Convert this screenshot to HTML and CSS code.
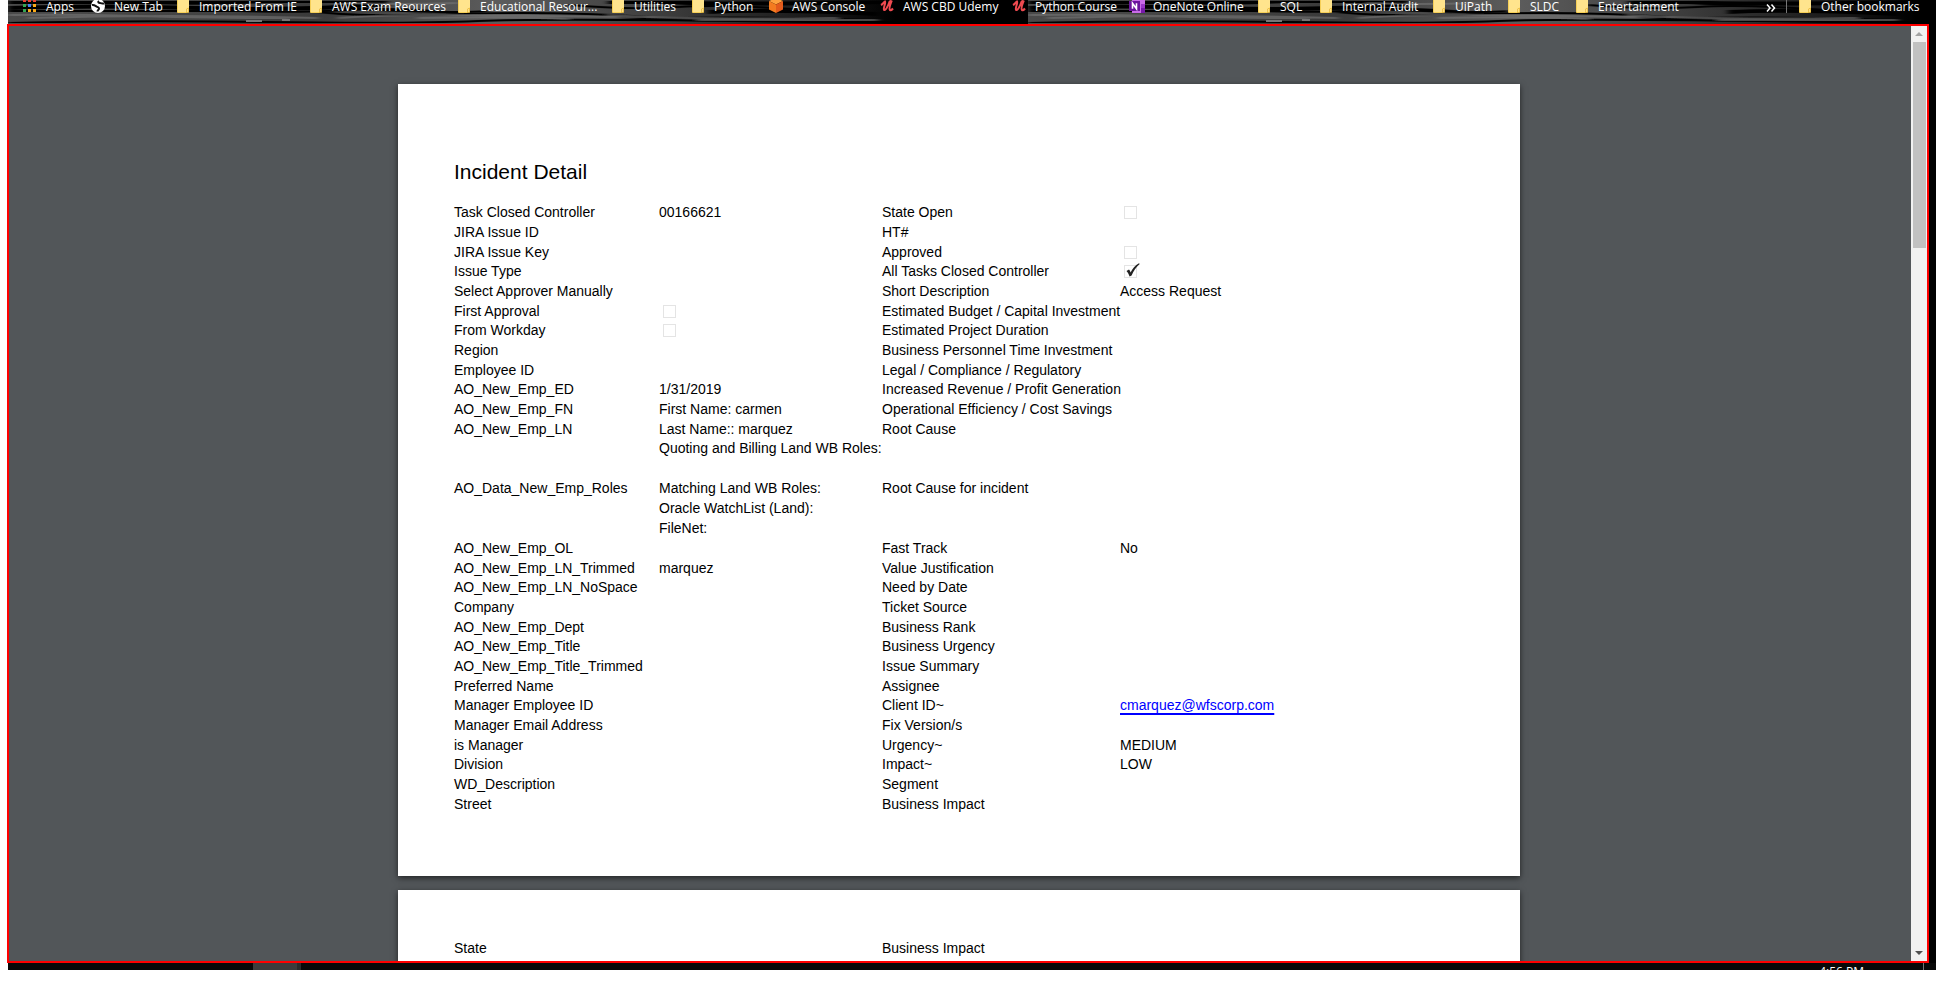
FILE: index.html
```html
<!DOCTYPE html>
<html lang="en">
<head>
<meta charset="utf-8">
<title>Incident Detail</title>
<link rel="stylesheet" href="styles.css">
</head>
<body>
<svg width="0" height="0" class="sprites" aria-hidden="true">
  <symbol id="folder" viewBox="0 0 16 16">
    <path d="M2 0h12v11.500l0 3.500H2z" fill="#ffe48d"/>
    <path d="M2.500 0v15.500h9" fill="none" stroke="#f6cf57"/>
    <path d="M11.500 16v-4l2-1v4.500h-2" fill="#ffe08a" stroke="#e8bb3c" stroke-width=".8"/>
  </symbol>
  <symbol id="apps" viewBox="0 0 16 16">
    <path d="M1 2h3v3H1zM6 2h3v3H6zM11 2h3v3h-3z" fill="#ea4335"/>
    <path d="M1 7h3v3H1zM1 12h3v3H1z" fill="#34a853"/>
    <path d="M6 7h3v3H6z" fill="#4285f4"/>
    <path d="M11 7h3v3h-3zM6 12h3v3H6zM11 12h3v3h-3z" fill="#fbab18"/>
  </symbol>
  <symbol id="globe" viewBox="0 0 16 16">
    <circle cx="8" cy="9" r="7" fill="#fff"/>
    <path d="M2 8c2-.5 3 .5 4.500 1.500s2.500.5 2.500 2-1.500 1.500-1.500 3M9 4c-1.500 1-.5 2 1 2s2.500 1 4 .5" fill="none" stroke="#111" stroke-width="2"/>
  </symbol>
  <symbol id="cube" viewBox="0 0 16 16">
    <path d="M8 1l7 3-7 3.500L1 4z" fill="#ffa13d"/>
    <path d="M1 4l7 3.500V16l-7-3.500z" fill="#f47b20"/>
    <path d="M15 4L8 7.500V16l7-3.500z" fill="#e35b1c"/>
  </symbol>
  <symbol id="udemy" viewBox="0 0 16 16">
    <path d="M2 8c2-1 2.500-3 4-3.500C7 6.500 4 10.500 5 12.800c1 1.200 3.500-2 5.500-8 1-1 1.500-.8 2-.5C11 8 10 12 11 13.200c1 .5 2-.5 3-1.700" fill="none" stroke="#ef4a50" stroke-width="2"/>
  </symbol>
  <symbol id="onenote" viewBox="0 0 16 16">
    <path d="M3 2h13v14H3z" fill="#c96be8"/>
    <path d="M12 7h4v4h-4z" fill="#9a35c9"/><path d="M12 11h4v5h-4z" fill="#7719aa"/>
    <path d="M0 4h11v10H0z" fill="#6b149c"/>
    <path d="M3.500 11.800V6.200l4 5.600V6.200" fill="none" stroke="#fff" stroke-width="1.600"/>
  </symbol>
</svg>
<div class="desktop">
  <nav class="bookmarks" aria-label="Bookmarks">
    <svg class="grain" aria-hidden="true">
      <defs>
        <filter id="soft" x="0" y="0" width="1" height="1"><feGaussianBlur stdDeviation="3 .6"/></filter>
        <linearGradient id="wood" x1="0" x2="1" y1="0" y2="0">
          <stop offset="0" stop-color="#4a4a4a"/><stop offset=".18" stop-color="#444"/>
          <stop offset=".3" stop-color="#3a3a3a"/><stop offset=".48" stop-color="#5c5c5c"/>
          <stop offset=".62" stop-color="#424242"/><stop offset=".78" stop-color="#1c1c1c"/>
          <stop offset=".87" stop-color="#000"/><stop offset="1" stop-color="#000"/>
        </linearGradient>
        <pattern id="streaks" width="1020" height="24" patternUnits="userSpaceOnUse">
          <rect width="1020" height="24" fill="url(#wood)"/>
          <g filter="url(#soft)">
            <g fill="none" stroke="#050505">
              <path d="M0 2H140q60 2 120-1h120M0 8q90-3 190 0t190-4" stroke-width="4"/>
              <path d="M0 11h230q60 2 110-1t120 4M330 8q110 6 150 3" stroke-width="2"/>
              <path d="M310 12q40 5 140 2t190 3M560 5q60 5 110 2t140 4" stroke-width="2"/>
              <path d="M0 23q120-3 260-1t210-1 330 1h220M610 20q100-5 260 0" stroke-width="2"/>
              <path d="M600 2h60q50 3 220 0M700 12q60-3 170 2" stroke-width="4"/>
            </g>
            <g fill="none" stroke="#777" stroke-opacity=".6">
              <path d="M0 15q60-1 130 1t150 2M20 18q140-4 290 0M330 18q60-4 130-3t150 2" stroke-width="2"/>
              <path d="M340 3q50 2 110 0M410 18q90-2 150 1M600 15q70 5 230 3M690 20h180" stroke-width="2"/>
            </g>
          </g>
          <path d="M238 21h16M274 20h8" stroke="#777" stroke-width="2"/>
        </pattern>
      </defs>
      <rect width="100%" height="24" fill="url(#streaks)"/>
    </svg>
    <a href="#"><svg><use href="#apps"/></svg>Apps</a>
    <a href="#"><svg><use href="#globe"/></svg>New Tab</a>
    <a href="#"><svg><use href="#folder"/></svg>Imported From IE</a>
    <a href="#"><svg><use href="#folder"/></svg>AWS Exam Reources</a>
    <a href="#"><svg><use href="#folder"/></svg>Educational Resour...</a>
    <a href="#"><svg><use href="#folder"/></svg>Utilities</a>
    <a href="#"><svg><use href="#folder"/></svg>Python</a>
    <a href="#"><svg><use href="#cube"/></svg>AWS Console</a>
    <a href="#"><svg><use href="#udemy"/></svg>AWS CBD Udemy</a>
    <a href="#"><svg><use href="#udemy"/></svg>Python Course</a>
    <a href="#"><svg><use href="#onenote"/></svg>OneNote Online</a>
    <a href="#"><svg><use href="#folder"/></svg>SQL</a>
    <a href="#"><svg><use href="#folder"/></svg>Internal Audit</a>
    <a href="#"><svg><use href="#folder"/></svg>UiPath</a>
    <a href="#"><svg><use href="#folder"/></svg>SLDC</a>
    <a href="#"><svg><use href="#folder"/></svg>Entertainment</a>
    <button type="button" class="more" aria-label="More bookmarks"><svg viewBox="0 0 10 8"><path d="M1 0.500l3 3.500-3 3.500M5.500 0.500l3 3.500-3 3.500"/></svg></button>
    <a href="#" class="other"><svg><use href="#folder"/></svg>Other bookmarks</a>
  </nav>

  <main class="viewer">
    <div class="pages">
      <section class="page">
        <h1>Incident Detail</h1>
        <table>
          <colgroup><col class="name"><col class="value"><col class="name2"><col></colgroup>
          <tbody>
            <tr><th>Task Closed Controller</th><td>00166621</td><th><label for="open">State Open</label></th><td><input type="checkbox" id="open"></td></tr>
            <tr><th>JIRA Issue ID</th><td></td><th>HT#</th><td></td></tr>
            <tr><th>JIRA Issue Key</th><td></td><th><label for="approved">Approved</label></th><td><input type="checkbox" id="approved"></td></tr>
            <tr><th>Issue Type</th><td></td><th><label for="closed">All Tasks Closed Controller</label></th><td class="ticked"><input type="checkbox" id="closed" checked><svg viewBox="0 0 14 14" aria-hidden="true"><path d="M0.500 8l2.500-1.500c.8.700 1.200 1.800 1.600 3C6.500 5.500 9 2.500 13 .3l.7.600C10 4 7.500 7.800 5.600 12.500l-2 1C2.800 11.500 2 9.500.5 8z"/></svg></td></tr>
            <tr><th>Select Approver Manually</th><td></td><th>Short Description</th><td>Access Request</td></tr>
            <tr><th><label for="first">First Approval</label></th><td><input type="checkbox" id="first"></td><th>Estimated Budget / Capital Investment</th><td></td></tr>
            <tr><th><label for="workday">From Workday</label></th><td><input type="checkbox" id="workday"></td><th>Estimated Project Duration</th><td></td></tr>
            <tr><th>Region</th><td></td><th>Business Personnel Time Investment</th><td></td></tr>
            <tr><th>Employee ID</th><td></td><th>Legal / Compliance / Regulatory</th><td></td></tr>
            <tr><th>AO_New_Emp_ED</th><td>1/31/2019</td><th>Increased Revenue / Profit Generation</th><td></td></tr>
            <tr><th>AO_New_Emp_FN</th><td>First Name: carmen</td><th>Operational Efficiency / Cost Savings</th><td></td></tr>
            <tr><th>AO_New_Emp_LN</th><td>Last Name:: marquez</td><th>Root Cause</th><td></td></tr>
            <tr class="roles"><th>AO_Data_New_Emp_Roles</th><td>Quoting and Billing Land WB Roles:<br><br>Matching Land WB Roles:<br>Oracle WatchList (Land):<br>FileNet:</td><th>Root Cause for incident</th><td></td></tr>
            <tr><th>AO_New_Emp_OL</th><td></td><th>Fast Track</th><td>No</td></tr>
            <tr><th>AO_New_Emp_LN_Trimmed</th><td>marquez</td><th>Value Justification</th><td></td></tr>
            <tr><th>AO_New_Emp_LN_NoSpace</th><td></td><th>Need by Date</th><td></td></tr>
            <tr><th>Company</th><td></td><th>Ticket Source</th><td></td></tr>
            <tr><th>AO_New_Emp_Dept</th><td></td><th>Business Rank</th><td></td></tr>
            <tr><th>AO_New_Emp_Title</th><td></td><th>Business Urgency</th><td></td></tr>
            <tr><th>AO_New_Emp_Title_Trimmed</th><td></td><th>Issue Summary</th><td></td></tr>
            <tr><th>Preferred Name</th><td></td><th>Assignee</th><td></td></tr>
            <tr><th>Manager Employee ID</th><td></td><th>Client ID~</th><td><a href="mailto:cmarquez@wfscorp.com">cmarquez@wfscorp.com</a></td></tr>
            <tr><th>Manager Email Address</th><td></td><th>Fix Version/s</th><td></td></tr>
            <tr><th>is Manager</th><td></td><th>Urgency~</th><td>MEDIUM</td></tr>
            <tr><th>Division</th><td></td><th>Impact~</th><td>LOW</td></tr>
            <tr><th>WD_Description</th><td></td><th>Segment</th><td></td></tr>
            <tr><th>Street</th><td></td><th>Business Impact</th><td></td></tr>
          </tbody>
        </table>
      </section>
      <section class="page">
        <table>
          <colgroup><col class="name"><col class="value"><col class="name2"><col></colgroup>
          <tbody>
            <tr><th>State</th><td></td><th>Business Impact</th><td></td></tr>
          </tbody>
        </table>
      </section>
    </div>
    <div class="scrollbar" aria-hidden="true">
      <svg class="arrow up" viewBox="0 0 16 16"><path d="M4 10h8L8 6z"/></svg>
      <div class="thumb"></div>
      <svg class="arrow down" viewBox="0 0 16 16"><path d="M4 6h8l-4 4z"/></svg>
    </div>
  </main>

  <footer class="taskbar">
    <div class="task"></div>
    <time class="clock">4:56 PM</time>
  </footer>
</div>
</body>
</html>
```
FILE: styles.css
```css
* { box-sizing: border-box; }

body {
  margin: 0;
  height: 100vh;
  padding: 0 0 17px 8px;
  display: flex;
  background: #fff;
  overflow: hidden;
}

.sprites { position: absolute; }

.desktop {
  flex: 1;
  min-width: 0;
  display: flex;
  flex-direction: column;
  background: #000;
}

/* Bookmarks bar */
.bookmarks {
  position: relative;
  height: 24px;
  padding-left: 14px;
  padding-right: 7px;
  display: grid;
  grid-template-columns: 68px 85px 133px 148px 154px 80px 78px 111px 132px 118px 127px 62px 113px 75px 68px 1fr 21px 142px;
  align-items: start;
  overflow: hidden;
  font: 12px/12px "Open Sans", "Noto Sans", sans-serif;
}

.grain {
  position: absolute;
  inset: 0;
  width: 100%;
  height: 24px;
}

.bookmarks a {
  position: relative;
  height: 13px;
  display: flex;
  align-items: flex-end;
  gap: 8px;
  color: #fff;
  text-decoration: none;
  white-space: nowrap;
}

.bookmarks a svg {
  flex: none;
  width: 16px;
  height: 16px;
}

.more {
  position: relative;
  height: 13px;
  padding: 2px 0 0;
  border: 0;
  border-right: 1px solid #777;
  background: none;
  text-align: left;
}

.more svg {
  display: block;
  width: 10px;
  height: 8px;
  fill: none;
  stroke: #fff;
  stroke-width: 1.5;
}

.bookmarks .other { padding-left: 10px; }

/* Document viewer */
.viewer {
  flex: 1;
  min-height: 0;
  margin: 0 7px 0 -1px;
  display: flex;
  border: 2px solid #f00;
  background: #525659;
  overflow: hidden;
}

.pages {
  flex: 1;
  display: flex;
  flex-direction: column;
  align-items: center;
  gap: 14px;
  padding: 58px 2px 0 0;
  overflow: hidden;
}

.page {
  flex: none;
  width: 100%;
  max-width: 1122px;
  padding: 48px 56px 63px;
  background: #fff;
  color: #000;
  box-shadow: 0 2px 6px rgba(0, 0, 0, 0.6);
  font: 14px/16px "Liberation Sans", Arial, sans-serif;
}

h1 {
  margin: 28px 0 18px;
  font-size: 21px;
  line-height: 24px;
  font-weight: 400;
}

table {
  width: 100%;
  table-layout: fixed;
  border-collapse: collapse;
}

.name { width: 205px; }
.value { width: 223px; }
.name2 { width: 238px; }

th, td {
  height: 20px;
  padding: 2px 0;
  text-align: left;
  font-weight: 400;
  white-space: nowrap;
  vertical-align: middle;
}

tr:nth-child(3n) > * {
  height: 19px;
  padding-bottom: 1px;
}

.roles > * {
  padding: 0;
  line-height: 20px;
}

td input {
  appearance: none;
  display: block;
  width: 13px;
  height: 13px;
  margin: 2px 0 1px 4px;
  border: 1px solid #e4e4e4;
}

.ticked { position: relative; }

.ticked svg {
  position: absolute;
  left: 6px;
  top: 2px;
  width: 14px;
  height: 14px;
  fill: #222;
}

td a {
  color: #00f;
  text-decoration: underline 2px;
  text-underline-offset: 3px;
  text-decoration-skip-ink: none;
}

/* Scrollbar */
.scrollbar {
  flex: none;
  width: 16px;
  display: flex;
  flex-direction: column;
  background: #f1f1f1;
}

.arrow {
  width: 16px;
  height: 16px;
}

.up { fill: #a3a3a3; }
.down { margin-top: auto; fill: #505050; }

.thumb {
  height: 22%;
  margin: 0 1px 0 2px;
  background: #c1c1c1;
}

/* Taskbar */
.taskbar {
  height: 7px;
  display: flex;
  justify-content: space-between;
  padding: 0 12px 0 245px;
  background: #080808;
  overflow: hidden;
}

.task {
  width: 48px;
  background: #3c3c3c;
  border-right: 4px solid #2b2b2b;
}

.clock {
  padding: 1px 59px 0 0;
  border-right: 1px solid #777;
  color: #fff;
  font: 12px/16px "Open Sans", "Noto Sans", sans-serif;
}
```
